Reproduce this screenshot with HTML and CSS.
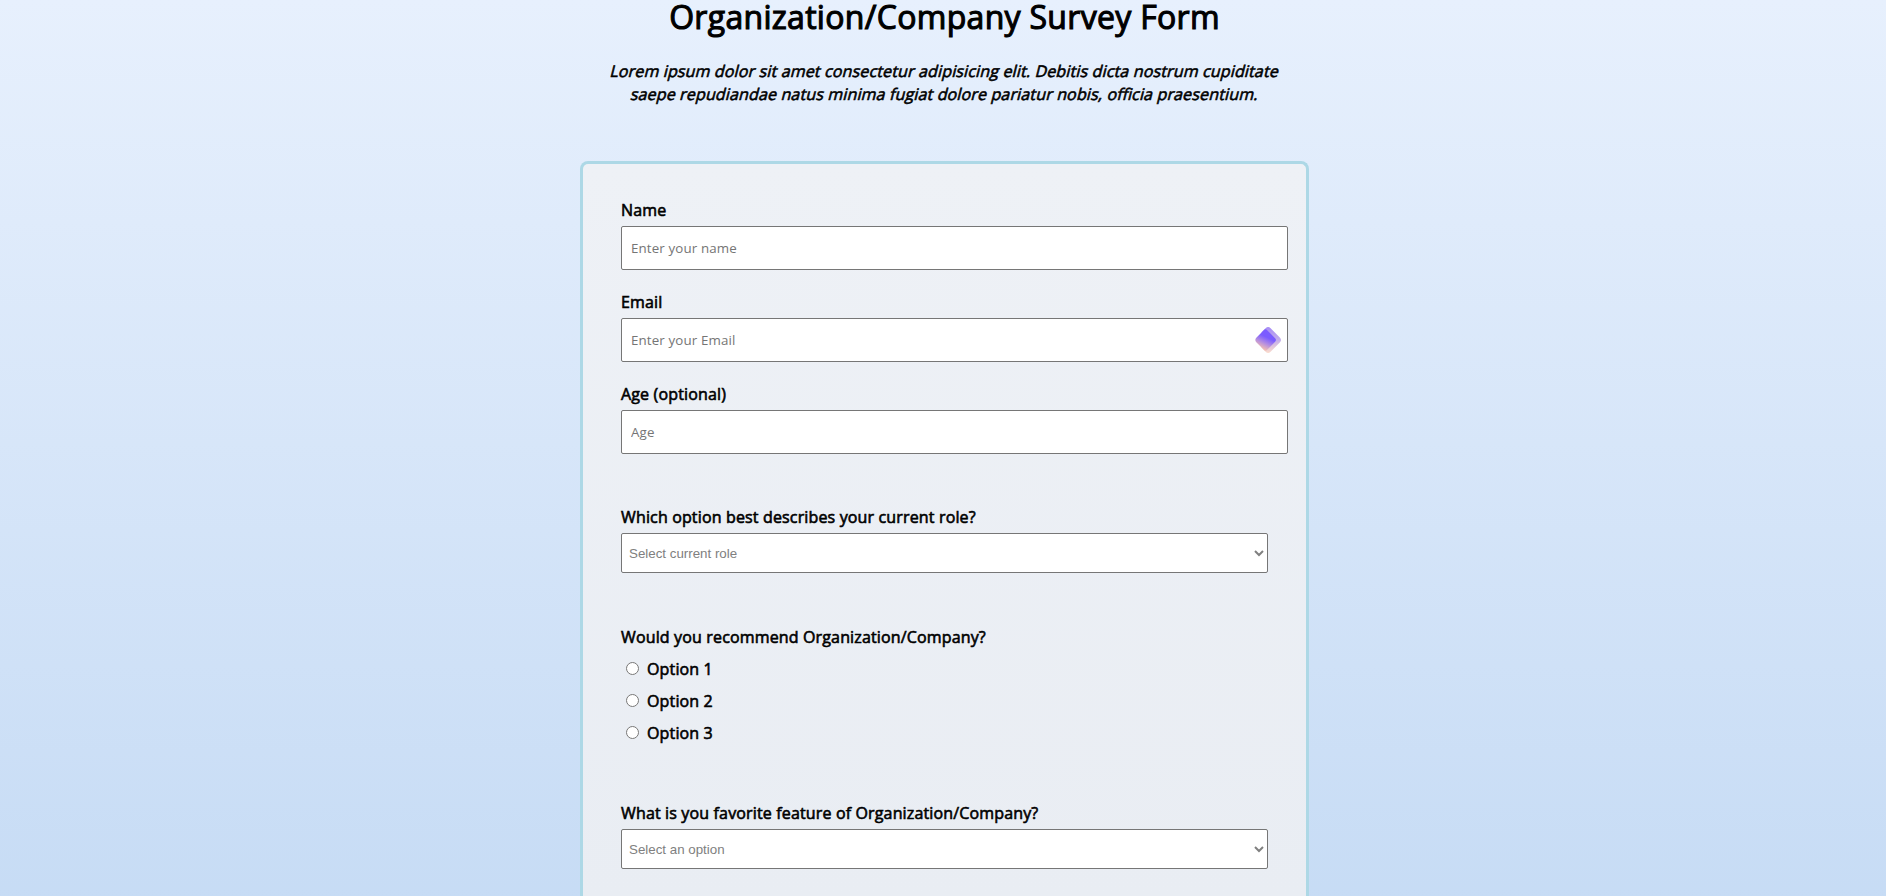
FILE: index.html
```html
<!DOCTYPE html>
<html lang="en">
<head>
<meta charset="utf-8">
<title>Survey Form</title>
<link rel="stylesheet" href="styles.css">
</head>
<body>
<header class="intro">
  <h1 class="title">Organization/Company Survey Form</h1>
  <p class="description"><span class="slanted">Lorem ipsum dolor sit amet consectetur adipisicing elit. Debitis dicta nostrum cupiditate</span><span class="slanted">saepe repudiandae natus minima fugiat dolore pariatur nobis, officia praesentium.</span></p>
</header>
<form class="survey">
  <div class="field">
    <label class="label" for="name">Name</label>
    <input class="input" id="name" type="text" placeholder="Enter your name">
  </div>
  <div class="field">
    <label class="label" for="email">Email</label>
    <div class="input-wrap">
      <input class="input" id="email" type="email" placeholder="Enter your Email">
      <svg class="badge" width="26" height="26" viewBox="0 0 26 26">
        <defs>
          <linearGradient id="front" x1="0.75" y1="0.15" x2="0.35" y2="1">
            <stop offset="0.3" stop-color="#7b5cff"/><stop offset="0.6" stop-color="#b08ae4"/><stop offset="1" stop-color="#ffc8a8"/>
          </linearGradient>
          <linearGradient id="back" x1="0.5" y1="0" x2="0.5" y2="1">
            <stop offset="0" stop-color="#a78df5"/><stop offset="0.5" stop-color="#c3aeea"/><stop offset="1" stop-color="#fbdccd"/>
          </linearGradient>
        </defs>
        <path fill="url(#back)" d="M10.600 1.200a3.600 3.600 0 0 1 5 0l9.200 9.300a3.600 3.600 0 0 1 0 5l-9.200 9.300a3.600 3.600 0 0 1-5 0l-4-4V5z"/>
        <path fill="url(#front)" d="M8.800 3.200a2.400 2.400 0 0 1 3.400 0l7.900 8.100a2.400 2.400 0 0 1 0 3.400l-7.900 8.100a2.400 2.400 0 0 1-3.400 0L1.500 15.500a3.600 3.600 0 0 1 0-5z"/>
      </svg>
    </div>
  </div>
  <div class="field">
    <label class="label" for="age">Age (optional)</label>
    <input class="input" id="age" type="text" placeholder="Age">
  </div>
  <div class="field question">
    <label class="label" for="role">Which option best describes your current role?</label>
    <select class="select" id="role"><option>Select current role</option></select>
  </div>
  <div class="field question">
    <p class="label">Would you recommend Organization/Company?</p>
    <label class="choice"><input class="radio" type="radio" name="recommend">Option 1</label>
    <label class="choice"><input class="radio" type="radio" name="recommend">Option 2</label>
    <label class="choice"><input class="radio" type="radio" name="recommend">Option 3</label>
  </div>
  <div class="field question">
    <label class="label" for="feature">What is you favorite feature of Organization/Company?</label>
    <select class="select" id="feature"><option>Select an option</option></select>
  </div>
</form>
</body>
</html>
```
FILE: styles.css
```css
* { box-sizing: border-box; }
html, body { height: 896px; overflow: hidden; }
body {
  margin: 0;
  padding-left: 3px;
  font: 400 16px/23px "Open Sans", sans-serif;
  letter-spacing: 0.15px;
  color: #000;
  -webkit-text-stroke: 0.6px #000;
  background: linear-gradient(#e7f0fd, #accbee 1640px);
}
.intro { height: 161px; text-align: center; }
.title {
  margin: 0;
  font-size: 32px;
  font-weight: 400;
  line-height: 34px;
  letter-spacing: 0.3px;
  -webkit-text-stroke-width: 1.1px;
}
.description {
  margin: 26px 0 0;
  padding-left: 1px;
  font-feature-settings: "liga" 1;
}
.slanted { display: block; transform: skewX(-14deg); }
.survey {
  width: 729px;
  height: 735px;
  margin: 0 auto;
  padding: 35px 38px 0;
  border: 3px solid #add8e6;
  border-bottom: 0;
  border-radius: 8px 8px 0 0;
  background: linear-gradient(#eef1f6, #e9edf3);
}
.field { margin-bottom: 21px; }
.question { margin-top: 53px; margin-bottom: 0; }
.field:nth-child(4) { margin-top: 52px; }
.label { display: block; margin: 0 0 4px; }
.input-wrap { position: relative; width: 667px; }
.input, .select {
  display: block;
  border: 1px solid #767676;
  border-radius: 2px;
  background-color: #fff;
  -webkit-text-stroke-width: 0;
}
.input {
  width: 667px;
  height: 44px;
  padding: 0 9px;
  font: 400 13.333px "Open Sans", sans-serif;
  letter-spacing: 0.13px;
}
.input::placeholder { color: #757575; }
.badge { position: absolute; right: 7px; top: 9px; overflow: visible; }
.select {
  width: 647px;
  height: 40px;
  padding: 0 4px 0 3px;
  font: 400 13.333px "Liberation Sans", Arial, sans-serif;
  color: gray;
}
.choice { display: flex; align-items: center; height: 32px; }
.radio { width: 13px; height: 13px; margin: 0 8px 2px 5px; }
```
